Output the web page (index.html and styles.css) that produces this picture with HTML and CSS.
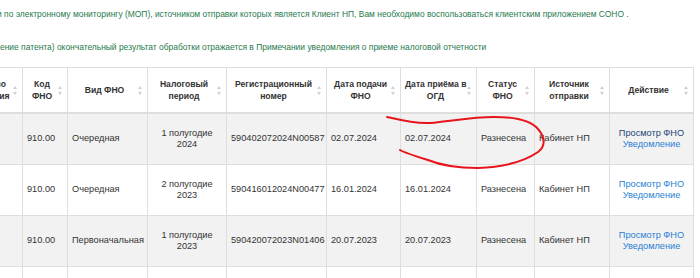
FILE: index.html
```html
<!DOCTYPE html>
<html lang="ru">
<head>
<meta charset="utf-8">
<link rel="stylesheet" href="styles.css">
</head>
<body>
<div class="page">
  <p class="note note1">и по электронному мониторингу (МОП), источником отправки которых является Клиент НП, Вам необходимо воспользоваться клиентским приложением СОНО .</p>
  <p class="note note2">ение патента) окончательный результат обработки отражается в Примечании уведомления о приеме налоговой отчетности</p>
  <div class="table-wrap">
    <table class="grid">
      <colgroup>
        <col class="c0"><col class="c1"><col class="c2"><col class="c3"><col class="c4"><col class="c5"><col class="c6"><col class="c7"><col class="c8"><col class="c9">
      </colgroup>
      <thead>
        <tr>
          <th class="first">Количество<br>уведомления<span class="sort"></span></th>
          <th>Код<br>ФНО<span class="sort"></span></th>
          <th>Вид ФНО<span class="sort"></span></th>
          <th>Налоговый<br>период<span class="sort"></span></th>
          <th>Регистрационный<br>номер<span class="sort"></span></th>
          <th>Дата подачи<br>ФНО<span class="sort"></span></th>
          <th>Дата приёма в<br>ОГД<span class="sort"></span></th>
          <th>Статус<br>ФНО<span class="sort"></span></th>
          <th>Источник<br>отправки<span class="sort"></span></th>
          <th>Действие<span class="sort"></span></th>
        </tr>
      </thead>
      <tbody>
        <tr>
          <td></td>
          <td>910.00</td>
          <td>Очередная</td>
          <td class="center">1 полугодие<br>2024</td>
          <td>590402072024N00587</td>
          <td>02.07.2024</td>
          <td>02.07.2024</td>
          <td>Разнесена</td>
          <td>Кабинет НП</td>
          <td class="center"><a class="link visited">Просмотр ФНО</a><br><a class="link">Уведомление</a></td>
        </tr>
        <tr>
          <td></td>
          <td>910.00</td>
          <td>Очередная</td>
          <td class="center">2 полугодие<br>2023</td>
          <td>590416012024N00477</td>
          <td>16.01.2024</td>
          <td>16.01.2024</td>
          <td>Разнесена</td>
          <td>Кабинет НП</td>
          <td class="center"><a class="link">Просмотр ФНО</a><br><a class="link">Уведомление</a></td>
        </tr>
        <tr>
          <td></td>
          <td>910.00</td>
          <td>Первоначальная</td>
          <td class="center">1 полугодие<br>2023</td>
          <td>590420072023N01406</td>
          <td>20.07.2023</td>
          <td>20.07.2023</td>
          <td>Разнесена</td>
          <td>Кабинет НП</td>
          <td class="center"><a class="link">Просмотр ФНО</a><br><a class="link">Уведомление</a></td>
        </tr>
        <tr>
          <td></td><td></td><td></td><td></td><td></td><td></td><td></td><td></td><td></td><td></td>
        </tr>
      </tbody>
    </table>
  </div>
  <svg class="annot" width="700" height="278" viewBox="0 0 700 278">
    <path d="M387,117 C400,120 416,124 430,123 C452,121 472,117 494,117 C516,117 531,121 538,129 C545,137 546,146 538,152 C525,161 505,167 478,168 C456,168 440,165 428,160 C415,156 405,153 400,150" fill="none" stroke="#e8141b" stroke-width="2" stroke-linecap="round"/>
  </svg>
</div>
</body>
</html>
```

FILE: styles.css
```css
html, body {
  margin: 0;
  padding: 0;
  background: #ffffff;
  overflow: hidden;
}

.page {
  position: relative;
  width: 700px;
  height: 278px;
  font-family: "Liberation Sans", Arial, sans-serif;
  color: #333333;
}

.note {
  margin: 0;
  font-size: 8.45px;
  line-height: 10px;
  color: #1f7a4d;
  white-space: nowrap;
}

.note1 {
  padding-top: 9px;
  margin-left: -3px;
}

.note2 {
  padding-top: 23px;
}

.table-wrap {
  margin-top: 15px;
  margin-left: -68px;
}

.grid {
  border-collapse: collapse;
  table-layout: fixed;
  width: 761px;
  font-size: 9.2px;
  line-height: 11.5px;
}

.c0 { width: 90px; }
.c1 { width: 45px; }
.c2 { width: 80px; }
.c3 { width: 79px; }
.c4 { width: 100px; }
.c5 { width: 74px; }
.c6 { width: 76px; }
.c7 { width: 58px; }
.c8 { width: 75px; }
.c9 { width: 84px; }

.grid th,
.grid td {
  border: 1px solid #dedede;
  vertical-align: middle;
  white-space: nowrap;
  overflow: hidden;
}

.grid th {
  position: relative;
  height: 44px;
  padding: 0 10px 0 4px;
  font-size: 8.6px;
  line-height: 12px;
  font-weight: bold;
  text-align: center;
  border-bottom: 2px solid #dedede;
  color: #333333;
}

.grid th.first {
  padding: 0 7px 0 14px;
}

.grid td {
  height: 50px;
  padding: 0 4px;
  text-align: left;
}

.grid td.center {
  text-align: center;
}

.grid tbody tr:nth-child(odd) td {
  background: #f2f2f2;
}

.sort {
  position: absolute;
  right: 4px;
  top: 50%;
  width: 5px;
  height: 9px;
  margin-top: -4px;
}

.sort::before,
.sort::after {
  content: "";
  position: absolute;
  left: 0;
  border-left: 2.5px solid transparent;
  border-right: 2.5px solid transparent;
}

.sort::before {
  top: 0;
  border-bottom: 3.5px solid #cfcfcf;
}

.sort::after {
  bottom: 0;
  border-top: 3.5px solid #cfcfcf;
}

.link {
  color: #2a7fd4;
  text-decoration: none;
}

.link.visited {
  color: #1c4777;
}

.annot {
  position: absolute;
  left: 0;
  top: 0;
  pointer-events: none;
}
```
